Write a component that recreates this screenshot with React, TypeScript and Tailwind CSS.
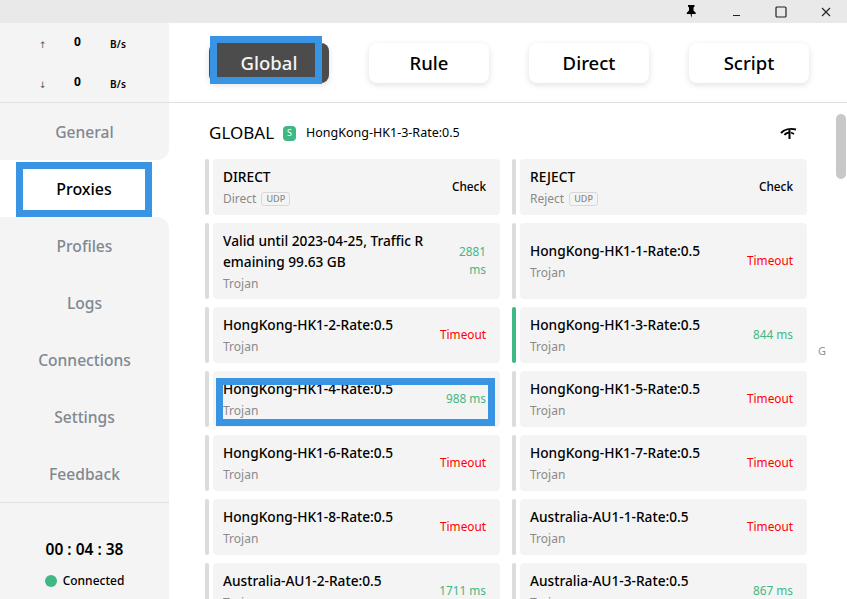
import React from "react";

const font = "font-['Noto_Sans','Open_Sans',sans-serif]";

type P = { name: React.ReactNode; type: string; delay: string; kind: "ok" | "bad" | "check"; udp?: boolean; active?: boolean; focus?: boolean; wrap?: boolean };

const rows: [P, P][] = [
  [
    { name: "DIRECT", type: "Direct", delay: "Check", kind: "check", udp: true },
    { name: "REJECT", type: "Reject", delay: "Check", kind: "check", udp: true },
  ],
  [
    { name: <>Valid until 2023-04-25, Traffic R<br />emaining 99.63 GB</>, type: "Trojan", delay: "2881 ms", kind: "ok", wrap: true },
    { name: "HongKong-HK1-1-Rate:0.5", type: "Trojan", delay: "Timeout", kind: "bad" },
  ],
  [
    { name: "HongKong-HK1-2-Rate:0.5", type: "Trojan", delay: "Timeout", kind: "bad" },
    { name: "HongKong-HK1-3-Rate:0.5", type: "Trojan", delay: "844 ms", kind: "ok", active: true },
  ],
  [
    { name: "HongKong-HK1-4-Rate:0.5", type: "Trojan", delay: "988 ms", kind: "ok", focus: true },
    { name: "HongKong-HK1-5-Rate:0.5", type: "Trojan", delay: "Timeout", kind: "bad" },
  ],
  [
    { name: "HongKong-HK1-6-Rate:0.5", type: "Trojan", delay: "Timeout", kind: "bad" },
    { name: "HongKong-HK1-7-Rate:0.5", type: "Trojan", delay: "Timeout", kind: "bad" },
  ],
  [
    { name: "HongKong-HK1-8-Rate:0.5", type: "Trojan", delay: "Timeout", kind: "bad" },
    { name: "Australia-AU1-1-Rate:0.5", type: "Trojan", delay: "Timeout", kind: "bad" },
  ],
  [
    { name: "Australia-AU1-2-Rate:0.5", type: "Trojan", delay: "1711 ms", kind: "ok" },
    { name: "Australia-AU1-3-Rate:0.5", type: "Trojan", delay: "867 ms", kind: "ok" },
  ],
];

function Card({ p }: { p: P }) {
  const delayClass =
    p.kind === "ok" ? "text-[#3fb884] text-[11.8px]" : p.kind === "bad" ? "text-[#ff0000] text-[11.8px]" : "text-black text-[11.8px] font-medium";
  return (
    <div className="flex gap-1 w-[295px] shrink-0">
      <div className={`w-1 shrink-0 rounded-sm ${p.active ? "bg-[#3fb884]" : "bg-[#dcdcdc]"}`} />
      <div className="relative flex items-center w-[287px] rounded bg-[#f4f4f4] pl-[10px] pr-[14px]">
        <div className="flex-1 min-w-0">
          <div className="text-[13.7px] leading-[21px] font-medium text-black whitespace-nowrap">{p.name}</div>
          <div className="flex items-center gap-[5px] h-5 mt-px translate-y-px text-[12px] text-[#8a8a8a]">
            <span>{p.type}</span>
            {p.udp && (
              <span className="border border-[#d8d8d8] rounded-[3px] px-1 text-[9px] leading-[12px] font-medium text-[#8a8a8a]">UDP</span>
            )}
          </div>
        </div>
        <div className={`${delayClass} text-right leading-[18px] -translate-y-px ${p.wrap ? "w-[34px]" : "whitespace-nowrap"}`}>{p.delay}</div>
        {p.focus && (
          <div className="absolute left-[3px] top-[7px] w-[279px] h-[48px] border-[7px] border-[#3a94e4] pointer-events-none" />
        )}
      </div>
    </div>
  );
}

function ModeButton({ label, active }: { label: string; active?: boolean }) {
  return (
    <div
      className={`relative w-[120px] h-10 rounded-lg flex items-center justify-center text-[18.5px] font-medium shadow-[0_2px_6px_rgba(0,0,0,0.12)] ${
        active ? "bg-[#4c4c4c] text-[#f4f4f4]" : "bg-white text-black"
      }`}
    >
      {label}
      {active && <div className="absolute left-px top-[-7px] w-[112px] h-[48px] border-[7px] border-[#3a94e4]" />}
    </div>
  );
}

function NavItem({ label, cls = "" }: { label: string; cls?: string }) {
  return (
    <div className={`h-[57px] flex items-center justify-center text-[15.6px] leading-[23px] pt-px font-medium text-[#808891] bg-[#f4f4f4] ${cls}`}>
      {label}
    </div>
  );
}

function Speed({ arrow }: { arrow: string }) {
  return (
    <div className="flex items-center h-5 pl-[39px]">
      <span className="w-[35px] text-[9px] text-[#555] font-['DejaVu_Sans',sans-serif] translate-y-[3px]">{arrow}</span>
      <span className="w-[36px] text-[12px] font-bold text-black -translate-y-px">0</span>
      <span className="text-[10px] font-semibold text-black tracking-wide translate-y-[2px]">B/s</span>
    </div>
  );
}

export default function App() {
  return (
    <div className={`${font} w-[847px] h-[599px] overflow-hidden bg-white flex flex-col`}>
      <div className="h-[23px] shrink-0 bg-[#e9e9e9] flex items-center justify-end">
        <svg width="12" height="13" viewBox="0 0 12 13" className="mr-[35px]">
          <path d="M3 0h6.500v1.500L8.500 2.500v3l2.200 2.300v1.200H7L6.300 13 5.600 9H1.800V7.800L4 5.500v-3L3 1.500z" fill="#000" />
        </svg>
        <svg width="10" height="10" viewBox="0 0 10 10" className="mr-[33px]">
          <rect x="1" y="8" width="7" height="1" fill="#222" />
        </svg>
        <svg width="12" height="12" viewBox="0 0 12 12" className="mr-[34px]">
          <rect x="1" y="1" width="10" height="10" rx="1" fill="none" stroke="#222" strokeWidth="1.2" />
        </svg>
        <svg width="10" height="10" viewBox="0 0 10 10" className="mr-[16px]">
          <path d="M1 1l8 8M9 1l-8 8" stroke="#222" strokeWidth="1.1" />
        </svg>
      </div>
      <div className="flex-1 min-h-0 flex">
        <aside className="w-[169px] shrink-0 bg-white flex flex-col">
          <div className="h-[80px] shrink-0 bg-[#f4f4f4] border-b border-[#e0e0e0] flex flex-col justify-center gap-5">
            <Speed arrow="↑" />
            <Speed arrow="↓" />
          </div>
          <div className="h-[399px] shrink-0 flex flex-col">
            <NavItem label="General" cls="rounded-br-xl" />
            <div className="h-[57px] bg-white flex items-end pl-4">
              <div className="w-[136px] h-[55px] border-[7px] border-[#3a94e4] flex items-center justify-center text-[16px] leading-[24px] pb-px font-medium text-black bg-white">
                Proxies
              </div>
            </div>
            <NavItem label="Profiles" cls="rounded-tr-xl" />
            <NavItem label="Logs" />
            <NavItem label="Connections" />
            <NavItem label="Settings" />
            <NavItem label="Feedback" />
          </div>
          <div className="flex-1 bg-[#f4f4f4] border-t border-[#e0e0e0] flex flex-col items-center pt-[35px]">
            <div className="text-[15.5px] leading-[22px] font-semibold text-black">00 : 04 : 38</div>
            <div className="flex items-center gap-[6px] mt-[11px] h-5 text-[12px] font-medium text-black">
              <span className="w-3 h-3 rounded-full bg-[#3fb884]" />
              Connected
            </div>
          </div>
        </aside>
        <main className="flex-1 min-w-0 flex flex-col relative">
          <div className="h-[80px] shrink-0 border-b border-[#e0e0e0] flex items-start gap-10 pl-[40px] pt-[20px]">
            <ModeButton label="Global" active />
            <ModeButton label="Rule" />
            <ModeButton label="Direct" />
            <ModeButton label="Script" />
          </div>
          <div className="flex-1 min-h-0 overflow-hidden pl-[36px]">
            <div className="flex items-center h-[56px] pt-1 w-[592px]">
              <span className="text-[17px] text-black ml-1">GLOBAL</span>
              <span className="ml-[9px] w-[13px] h-[15px] rounded-sm bg-[#3fb884] text-white text-[9px] flex items-center justify-center">S</span>
              <span className="ml-[10px] text-[12.5px] text-black">HongKong-HK1-3-Rate:0.5</span>
              <svg width="17" height="13" viewBox="0 0 17 13" className="ml-auto">
                <path d="M1 6C4 2.500 10 1 16 2.500" fill="none" stroke="#000" strokeWidth="2" />
                <path d="M4.500 8C6 6 8 5.500 10 5.500" fill="none" stroke="#000" strokeWidth="1.800" />
                <path d="M9.500 2.500V12" fill="none" stroke="#000" strokeWidth="2" />
                <path d="M11 5.500l3 1.500" fill="none" stroke="#000" strokeWidth="1.600" />
              </svg>
            </div>
            <div className="flex flex-col gap-2">
              {rows.map((r, i) => (
                <div key={i} className={`flex gap-3 ${i === 1 ? "h-[76px]" : "h-14"}`}>
                  <Card p={r[0]} />
                  <Card p={r[1]} />
                </div>
              ))}
            </div>
          </div>
          <div className="absolute right-[1px] top-[91px] w-[10px] h-[65px] rounded-[5px] bg-[#c8c8c8]" />
          <div className="absolute left-[649px] top-[320px] text-[11px] text-[#909090]">G</div>
        </main>
      </div>
    </div>
  );
}
